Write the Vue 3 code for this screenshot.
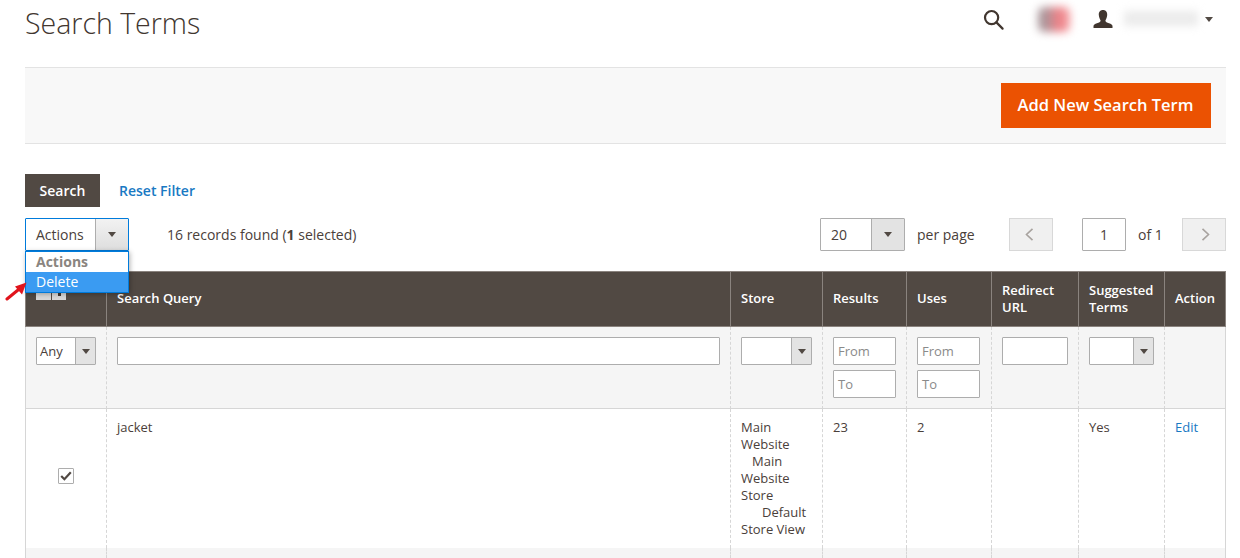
<script setup>
const cols = [81, 624, 92, 84, 85, 87, 86, 62]
const heads = ['', 'Search Query', 'Store', 'Results', 'Uses', 'Redirect URL', 'Suggested Terms', 'Action']
const storeLines = [
  { text: 'Main', cls: '' },
  { text: 'Website', cls: '' },
  { text: 'Main', cls: 'ind1' },
  { text: 'Website', cls: '' },
  { text: 'Store', cls: '' },
  { text: 'Default', cls: 'ind2' },
  { text: 'Store View', cls: '' }
]
</script>

<template>
  <div class="page">
    <header class="top">
      <h1 class="title">Search Terms</h1>
      <div class="tools">
        <svg class="search-ic" width="22" height="22" viewBox="0 0 22 22" fill="none" stroke="#41362f" stroke-width="2.2">
          <circle cx="8.6" cy="8.6" r="6.6" />
          <path d="M13.4 13.4 L19.6 19.6" stroke-linecap="round" />
        </svg>
        <span class="blur-avatar"></span>
        <svg class="user-ic" width="20" height="18" viewBox="0 0 20 18" fill="#41362f">
          <path d="M10 0 C13 0 14.4 2.2 14.2 5 C14 7.6 13 9.4 12.4 10.4 C12.4 12 14 12.4 16 13.2 C18.2 14 19.5 14.6 19.5 16 V18 H0.5 V16 C0.5 14.6 1.8 14 4 13.2 C6 12.4 7.6 12 7.6 10.4 C7 9.4 6 7.6 5.8 5 C5.6 2.2 7 0 10 0 Z" />
        </svg>
        <span class="blur-name"></span>
        <span class="caret top-caret"></span>
      </div>
    </header>

    <div class="action-bar">
      <button class="primary" type="button">Add New Search Term</button>
    </div>

    <div class="filter-actions">
      <button class="dark-btn" type="button">Search</button>
      <a class="reset" href="#">Reset Filter</a>
    </div>

    <div class="toolbar">
      <div class="left">
        <div class="actions-wrap">
          <div class="select focus actions-sel">
            <span class="sel-text">Actions</span>
            <span class="sel-btn"><span class="caret"></span></span>
          </div>
          <div class="menu">
            <div class="menu-head">Actions</div>
            <div class="menu-item">Delete</div>
          </div>
          <svg class="arrow" width="24" height="20" viewBox="0 0 24 20">
            <path d="M2 17 L13 8" stroke="#e0141c" stroke-width="3" stroke-linecap="round" />
            <path d="M21.5 0.5 L17 12.5 L10 4.5 Z" fill="#e0141c" />
          </svg>
        </div>
        <span class="records">16 records found (<b>1</b> selected)</span>
      </div>
      <div class="right">
        <div class="select pager-sel">
          <span class="sel-text">20</span>
          <span class="sel-btn"><span class="caret"></span></span>
        </div>
        <span class="per">per page</span>
        <span class="nav-btn prev">
          <svg width="9" height="13" viewBox="0 0 9 13" fill="none" stroke="#a8a39f" stroke-width="1.6"><path d="M7.5 0.8 L1.5 6.5 L7.5 12.2" /></svg>
        </span>
        <span class="page-box">1</span>
        <span class="of">of 1</span>
        <span class="nav-btn next">
          <svg width="9" height="13" viewBox="0 0 9 13" fill="none" stroke="#a8a39f" stroke-width="1.6"><path d="M1.5 0.8 L7.5 6.5 L1.5 12.2" /></svg>
        </span>
      </div>
    </div>

    <table class="grid">
      <colgroup>
        <col v-for="(w, i) in cols" :key="i" :style="{ width: w + 'px' }" />
      </colgroup>
      <thead>
        <tr>
          <th v-for="(h, i) in heads" :key="i">
            <span v-if="i === 0" class="head-check"><i></i><i class="head-check-btn"></i></span>
            <template v-else>{{ h }}</template>
          </th>
        </tr>
      </thead>
      <tbody>
        <tr class="filters">
          <td>
            <div class="select mini any"><span class="sel-text">Any</span><span class="sel-btn"><span class="caret"></span></span></div>
          </td>
          <td><div class="inp wide"></div></td>
          <td><div class="select mini store-sel"><span class="sel-text"></span><span class="sel-btn"><span class="caret"></span></span></div></td>
          <td>
            <div class="inp ph">From</div>
            <div class="inp ph second">To</div>
          </td>
          <td>
            <div class="inp ph">From</div>
            <div class="inp ph second">To</div>
          </td>
          <td><div class="inp wide"></div></td>
          <td><div class="select mini store-sel sugg"><span class="sel-text"></span><span class="sel-btn"><span class="caret"></span></span></div></td>
          <td></td>
        </tr>
        <tr class="row">
          <td class="check-cell">
            <span class="check">
              <svg width="12" height="10" viewBox="0 0 12 10" fill="none" stroke="#514943" stroke-width="2.2"><path d="M1.2 5 L4.4 8.2 L10.8 1.2" /></svg>
            </span>
          </td>
          <td>jacket</td>
          <td class="store">
            <div v-for="(l, i) in storeLines" :key="i" :class="l.cls">{{ l.text }}</div>
          </td>
          <td>23</td>
          <td>2</td>
          <td></td>
          <td>Yes</td>
          <td><a class="edit" href="#">Edit</a></td>
        </tr>
        <tr class="next-row">
          <td v-for="n in 8" :key="n"></td>
        </tr>
      </tbody>
    </table>
  </div>
</template>

<style>
html, body { margin: 0; background: #fff; overflow: hidden; }
</style>

<style scoped>
.page {
  width: 1201px;
  height: 558px;
  padding-left: 25px;
  font-family: "Open Sans", "Liberation Sans", sans-serif;
  font-size: 14px;
  color: #4a403a;
  overflow: hidden;
}
.top {
  height: 67px;
  display: flex;
  justify-content: space-between;
  align-items: flex-start;
}
.title {
  margin: 3px 0 0;
  font-size: 28.5px;
  line-height: 40px;
  font-weight: 300;
  color: #41362f;
}
.tools {
  display: flex;
  align-items: center;
  padding-top: 6px;
  height: 28px;
  margin-right: 13px;
}
.search-ic { margin-right: 33px; }
.blur-avatar {
  width: 32px;
  height: 25px;
  margin: -2px 23px 0 0;
  border-radius: 6px;
  background: linear-gradient(90deg, #a8989b 0%, #b0959a 28%, #ee7f85 62%, #f3a0a4 100%);
  filter: blur(4.5px);
}
.user-ic { margin: -3px 11px 0 0; }
.blur-name {
  width: 74px;
  height: 15px;
  margin: -3px 7px 0 0;
  background: #ebebeb;
  filter: blur(4.5px);
}
.caret {
  width: 0;
  height: 0;
  border-left: 4.5px solid transparent;
  border-right: 4.5px solid transparent;
  border-top: 5px solid #514943;
  display: block;
}
.top-caret { margin-top: -2px; }
.action-bar {
  height: 75px;
  background: #f8f8f8;
  border-top: 1px solid #e3e3e3;
  border-bottom: 1px solid #e3e3e3;
  display: flex;
  justify-content: flex-end;
  align-items: flex-start;
  padding-right: 15px;
}
.primary {
  margin-top: 15px;
  width: 210px;
  height: 45px;
  border: 0;
  background: #eb5202;
  color: #fff;
  font-family: inherit;
  font-size: 16.5px;
  line-height: 43px;
  font-weight: 600;
  padding: 0 1px 2px 0;
}
.filter-actions {
  margin-top: 30px;
  display: flex;
  align-items: center;
  gap: 19px;
}
.dark-btn {
  width: 75px;
  height: 33px;
  border: 0;
  background: #514943;
  color: #fff;
  font-family: inherit;
  font-size: 14px;
  font-weight: 600;
  padding: 0;
}
.reset {
  color: #1979c3;
  font-size: 14px;
  font-weight: 600;
  text-decoration: none;
}
.toolbar {
  margin-top: 11px;
  height: 53px;
  display: flex;
  justify-content: space-between;
  align-items: flex-start;
}
.left, .right { display: flex; align-items: center; height: 33px; }
.actions-wrap { position: relative; width: 104px; height: 33px; margin-right: 38px; }
.select {
  box-sizing: border-box;
  display: flex;
  background: #fff;
  border: 1px solid #adadad;
  border-radius: 1px;
}
.select.focus { border-color: #007bdb; }
.sel-text { flex: 1; min-width: 0; align-self: center; color: #4a403a; }
.sel-btn {
  box-sizing: border-box;
  width: 33px;
  flex: none;
  background: #e3e3e3;
  border-left: 1px solid #adadad;
  display: flex;
  align-items: center;
  justify-content: center;
}
.actions-sel { width: 104px; height: 33px; }
.actions-sel .sel-text { padding-left: 10px; }
.actions-sel .sel-btn {
  background: linear-gradient(#f2f2f2, #dedede);
}
.menu {
  position: absolute;
  z-index: 3;
  left: 0;
  top: 33px;
  width: 104px;
  box-sizing: border-box;
  height: 42px;
  background: #fff;
  border: 1px solid #007bdb;
  box-shadow: 1px 1px 5px rgba(0, 0, 0, 0.3);
  line-height: 20px;
}
.menu-head { height: 20px; padding-left: 10px; font-weight: 700; color: #8a8580; }
.menu-item { height: 20px; padding-left: 10px; background: #3a9bf2; color: #fff; }
.arrow { position: absolute; z-index: 4; left: -20px; top: 64px; }
.records b { font-weight: 700; }
.pager-sel { width: 85px; height: 33px; }
.pager-sel .sel-text { padding-left: 10px; }
.per { margin-left: 12px; width: 92px; }
.nav-btn {
  box-sizing: border-box;
  width: 44px;
  height: 33px;
  background: #f0f0f0;
  border: 1px solid #d8d8d8;
  display: flex;
  align-items: center;
  justify-content: center;
}
.nav-btn.prev { padding-right: 3px; }
.nav-btn.next { padding-left: 2px; }
.page-box {
  box-sizing: border-box;
  width: 44px;
  height: 33px;
  margin-left: 29px;
  border: 1px solid #adadad;
  border-radius: 1px;
  display: flex;
  align-items: center;
  justify-content: center;
}
.of { margin-left: 12px; width: 44px; }
.grid {
  table-layout: fixed;
  border-collapse: separate;
  border-spacing: 0;
  width: 1201px;
}
.grid th {
  box-sizing: border-box;
  height: 56px;
  background: #514943;
  color: #fff;
  font-size: 13px;
  line-height: 17px;
  font-weight: 600;
  text-align: left;
  padding: 0 10px 1px;
  border-left: 1px solid #8a837e;
  border-top: 1px solid #8a837e;
  border-bottom: 1px solid #8a837e;
}
.grid th:last-child { border-right: 1px solid #8a837e; }
.head-check {
  display: flex;
  width: 30px;
  height: 17px;
  margin: -15px 0 0 0;
  gap: 1px;
}
.head-check i { flex: 1; background: #d8d8d8; }
.head-check-btn { position: relative; }
.head-check-btn::after {
  content: "";
  position: absolute;
  left: 6px;
  top: 10px;
  width: 3px;
  height: 3px;
  background: #41362f;
}
.grid td {
  box-sizing: border-box;
  padding: 10px;
  vertical-align: top;
  font-size: 13px;
  line-height: 17px;
  color: #4a403a;
  border-left: 1px dashed #d6d6d6;
}
.grid td:first-child { border-left: 1px solid #d6d6d6; }
.grid td:last-child { border-right: 1px solid #d6d6d6; }
.filters td {
  height: 82px;
  background: #f5f5f5;
  border-bottom: 1px solid #d6d6d6;
}
.inp {
  box-sizing: border-box;
  height: 28px;
  background: #fff;
  border: 1px solid #adadad;
  border-radius: 1px;
}
.inp.ph {
  width: 63px;
  line-height: 26px;
  padding-left: 4px;
  color: #8a8a8a;
}
.inp.second { margin-top: 5px; }
.mini { height: 28px; }
.mini .sel-btn { width: 20px; }
.mini .caret { border-left-width: 4px; border-right-width: 4px; }
.any { width: 60px; }
.any .sel-text { padding-left: 3px; }
.store-sel { width: 71px; }
.sugg { width: 65px; }
.row td { height: 139px; padding-top: 10px; }
.grid td.check-cell { vertical-align: middle; padding: 0 0 6px 32px; }
.check {
  box-sizing: border-box;
  width: 16px;
  height: 16px;
  border: 1px solid #adadad;
  border-radius: 1px;
  background: #fff;
  display: flex;
  align-items: center;
  justify-content: center;
}
.store .ind1 { padding-left: 11px; }
.store .ind2 { padding-left: 21px; }
.edit { color: #1979c3; text-decoration: none; }
.next-row td { height: 10px; padding: 0; background: #f5f5f5; }
</style>
